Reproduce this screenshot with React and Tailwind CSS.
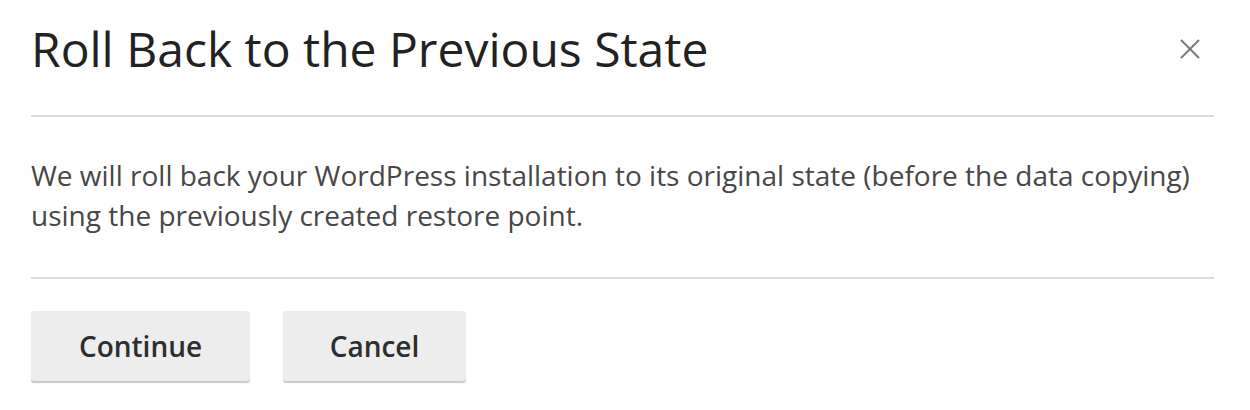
export default function App() {
  return (
    <div className="w-[1250px] h-[410px] bg-white pl-[31px] pr-[36px] font-['Open_Sans',sans-serif]">
      {/* Header */}
      <div className="flex items-center justify-between h-[98px]">
        <h1 className="text-[48px] leading-none text-[#222222] font-normal">
          Roll Back to the Previous State
        </h1>
        <button className="mr-[13px] text-[#7a7a7a]" aria-label="Close">
          <svg width="22" height="22" viewBox="0 0 22 22" fill="none" stroke="currentColor" strokeWidth="2">
            <line x1="2" y1="2" x2="20" y2="20" />
            <line x1="20" y1="2" x2="2" y2="20" />
          </svg>
        </button>
      </div>
      <div className="mt-[17px] h-[2px] bg-[#dcdbe4]" />

      {/* Body */}
      <div className="pt-[38px] pb-[42px]">
        <p className="text-[28px] leading-[40px] text-[#474747]">
          We will roll back your WordPress installation to its original state (before the data copying)
          using the previously created restore point.
        </p>
      </div>
      <div className="h-[2px] bg-[#dcdbe4]" />

      {/* Footer */}
      <div className="flex gap-[33px] pt-[32px]">
        <button className="w-[219px] h-[70px] rounded-[3px] bg-[#ededed] shadow-[0_2px_1px_rgba(0,0,0,0.22)] text-[28px] font-semibold text-[#2e2e2e]">
          Continue
        </button>
        <button className="w-[183px] h-[70px] rounded-[3px] bg-[#ededed] shadow-[0_2px_1px_rgba(0,0,0,0.22)] text-[28px] font-semibold text-[#2e2e2e]">
          Cancel
        </button>
      </div>
    </div>
  );
}
